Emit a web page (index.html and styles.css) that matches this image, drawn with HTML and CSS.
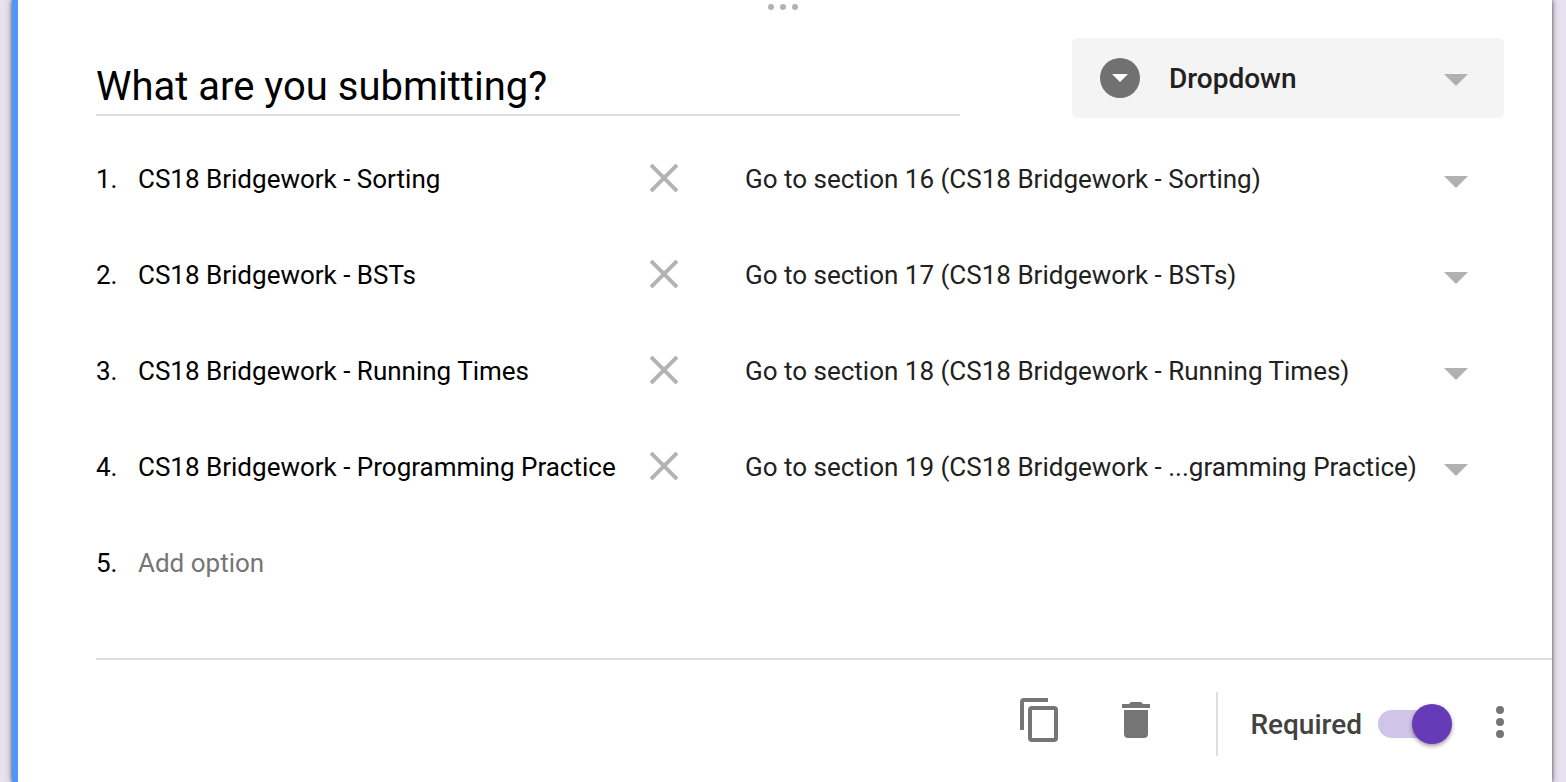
FILE: index.html
```html
<!DOCTYPE html>
<html lang="en">
<head>
<meta charset="utf-8">
<title>Form editor</title>
<link rel="stylesheet" href="styles.css">
</head>
<body>
<main class="card">
  <svg class="drag" width="32" height="8" viewBox="0 0 32 8" aria-hidden="true"><circle cx="4" cy="4" r="3"/><circle cx="16" cy="4" r="3"/><circle cx="28" cy="4" r="3"/></svg>
  <header class="head">
    <input class="title" type="text" value="What are you submitting?" aria-label="Question">
    <div class="picker kind">
      <svg class="kind-icon" width="40" height="40" viewBox="0 0 40 40" aria-hidden="true"><circle cx="20" cy="20" r="20" fill="#717171"/><path d="M12 16h16l-8 8z" fill="#fff"/></svg>
      <select class="kind-select" aria-label="Question type"><option>Dropdown</option></select>
      <svg class="arrow" width="24" height="12" viewBox="0 0 24 12" aria-hidden="true"><path d="M0 0h24L12 12z"/></svg>
    </div>
  </header>
  <ol class="options">
    <li class="row">
      <div class="option"><span class="num">1.</span><input class="text" type="text" value="CS18 Bridgework - Sorting" aria-label="Option 1"><button class="remove" type="button" aria-label="Remove option 1"><svg width="28" height="28" viewBox="0 0 28 28"><path d="M1 1l26 26M27 1L1 27"/></svg></button></div>
      <div class="picker"><select class="goto" aria-label="Destination for option 1"><option>Go to section 16 (CS18 Bridgework - Sorting)</option></select><svg class="arrow" width="24" height="12" viewBox="0 0 24 12" aria-hidden="true"><path d="M0 0h24L12 12z"/></svg></div>
    </li>
    <li class="row">
      <div class="option"><span class="num">2.</span><input class="text" type="text" value="CS18 Bridgework - BSTs" aria-label="Option 2"><button class="remove" type="button" aria-label="Remove option 2"><svg width="28" height="28" viewBox="0 0 28 28"><path d="M1 1l26 26M27 1L1 27"/></svg></button></div>
      <div class="picker"><select class="goto" aria-label="Destination for option 2"><option>Go to section 17 (CS18 Bridgework - BSTs)</option></select><svg class="arrow" width="24" height="12" viewBox="0 0 24 12" aria-hidden="true"><path d="M0 0h24L12 12z"/></svg></div>
    </li>
    <li class="row">
      <div class="option"><span class="num">3.</span><input class="text" type="text" value="CS18 Bridgework - Running Times" aria-label="Option 3"><button class="remove" type="button" aria-label="Remove option 3"><svg width="28" height="28" viewBox="0 0 28 28"><path d="M1 1l26 26M27 1L1 27"/></svg></button></div>
      <div class="picker"><select class="goto" aria-label="Destination for option 3"><option>Go to section 18 (CS18 Bridgework - Running Times)</option></select><svg class="arrow" width="24" height="12" viewBox="0 0 24 12" aria-hidden="true"><path d="M0 0h24L12 12z"/></svg></div>
    </li>
    <li class="row">
      <div class="option"><span class="num">4.</span><input class="text" type="text" value="CS18 Bridgework - Programming Practice" aria-label="Option 4"><button class="remove" type="button" aria-label="Remove option 4"><svg width="28" height="28" viewBox="0 0 28 28"><path d="M1 1l26 26M27 1L1 27"/></svg></button></div>
      <div class="picker"><select class="goto" aria-label="Destination for option 4"><option>Go to section 19 (CS18 Bridgework - ...gramming Practice)</option></select><svg class="arrow" width="24" height="12" viewBox="0 0 24 12" aria-hidden="true"><path d="M0 0h24L12 12z"/></svg></div>
    </li>
    <li class="row">
      <div class="option"><span class="num">5.</span><input class="text" type="text" placeholder="Add option" aria-label="Add option"></div>
    </li>
  </ol>
  <footer class="foot">
    <button class="tool" type="button" aria-label="Duplicate"><svg width="48" height="48" viewBox="0 0 48 48"><path d="M32 2H8a4 4 0 0 0-4 4v28h4V6h24z"/><path fill-rule="evenodd" d="M16 10h22a4 4 0 0 1 4 4v28a4 4 0 0 1-4 4H16a4 4 0 0 1-4-4V14a4 4 0 0 1 4-4zm0 4v28h22V14z"/></svg></button>
    <button class="tool" type="button" aria-label="Delete"><svg width="48" height="48" viewBox="0 0 48 48"><path d="M10 8h7l2-2h10l2 2h7v4H10zM12 14h24v24a4 4 0 0 1-4 4H16a4 4 0 0 1-4-4z"/></svg></button>
    <label class="required"><span>Required</span><input class="switch" type="checkbox" checked></label>
    <button class="more" type="button" aria-label="More options"><svg width="8" height="32" viewBox="0 0 8 32"><circle cx="4" cy="4" r="4"/><circle cx="4" cy="16" r="4"/><circle cx="4" cy="28" r="4"/></svg></button>
  </footer>
</main>
</body>
</html>
```
FILE: styles.css
```css
* {
  box-sizing: border-box;
}

body {
  margin: 0;
  padding: 0 14px 0 12px;
  background: #e8e2f0;
  font-family: Roboto, "Liberation Sans", sans-serif;
  font-size: 26px;
  color: #000;
  overflow: hidden;
}

input,
select,
button {
  margin: 0;
  padding: 0;
  border: 0;
  background: transparent;
  font: inherit;
  color: inherit;
  appearance: none;
  outline: none;
}

svg {
  display: block;
}

.card {
  min-height: 100vh;
  padding: 3px 0 0 78px;
  border-left: 6px solid #5195fb;
  background: #fff;
  box-shadow: 0 0 4px rgba(0, 0, 0, 0.6), 0 0 8px rgba(0, 0, 0, 0.25);
}

.drag {
  margin: 0 auto;
  position: relative;
  left: -41px;
  fill: #b1b1b1;
}

.head {
  display: flex;
  gap: 112px;
  padding: 27px 48px 0 0;
}

.title {
  flex: 1;
  min-width: 0;
  height: 78px;
  padding-top: 20px;
  border-bottom: 2px solid #dfdfdf;
  font-size: 40px;
}

.picker {
  position: relative;
  display: flex;
  align-items: center;
}

.arrow {
  position: absolute;
  right: 36px;
  fill: #b0b0b0;
  pointer-events: none;
}

.kind {
  width: 432px;
  height: 80px;
  border-radius: 6px;
  background: #f4f4f4;
}

.kind .arrow {
  top: 36px;
}

.kind-icon {
  position: absolute;
  left: 28px;
  pointer-events: none;
}

.kind-select {
  width: 100%;
  height: 100%;
  padding: 0 72px 0 97px;
  font-size: 28px;
  font-weight: 500;
  color: #212121;
}

.options {
  margin: 0;
  padding: 13px 48px 47px 0;
  list-style: none;
}

.row {
  display: grid;
  grid-template-columns: minmax(0, 592fr) minmax(0, 759fr);
  gap: 57px;
  height: 96px;
}

.option {
  display: flex;
  align-items: center;
}

.num {
  width: 42px;
}

.text {
  flex: 1;
  min-width: 0;
  height: 48px;
}

.text::placeholder {
  color: #757575;
  opacity: 1;
}

.remove {
  display: grid;
  place-items: center;
  width: 48px;
  height: 48px;
  padding-bottom: 2px;
}

.remove path {
  stroke: #b3b3b3;
  stroke-width: 4;
}

.row .arrow {
  top: 45px;
}

.goto {
  width: 100%;
  height: 48px;
  padding-right: 72px;
  color: #212121;
}

.foot {
  display: flex;
  justify-content: flex-end;
  padding: 32px 28px 0 0;
  border-top: 2px solid #dfdfdf;
}

.tool {
  display: grid;
  place-items: center;
  width: 96px;
  height: 56px;
}

.tool svg,
.more svg {
  fill: #757575;
}

.required {
  display: flex;
  align-items: center;
  gap: 16px;
  height: 64px;
  margin-left: 32px;
  padding-left: 32px;
  border-left: 2px solid #dfdfdf;
  font-size: 28px;
  font-weight: 500;
  color: #424242;
}

.switch {
  position: relative;
  width: 74px;
  height: 40px;
}

.switch::before {
  content: "";
  position: absolute;
  top: 6px;
  left: 0;
  width: 68px;
  height: 28px;
  border-radius: 14px;
  background: #d1c4e9;
}

.switch::after {
  content: "";
  position: absolute;
  top: 0;
  right: 0;
  width: 40px;
  height: 40px;
  border-radius: 50%;
  background: #673ab7;
  box-shadow: 0 2px 4px rgba(0, 0, 0, 0.4);
}

.more {
  display: grid;
  place-items: center;
  width: 48px;
  height: 60px;
  margin-left: 24px;
}
```
